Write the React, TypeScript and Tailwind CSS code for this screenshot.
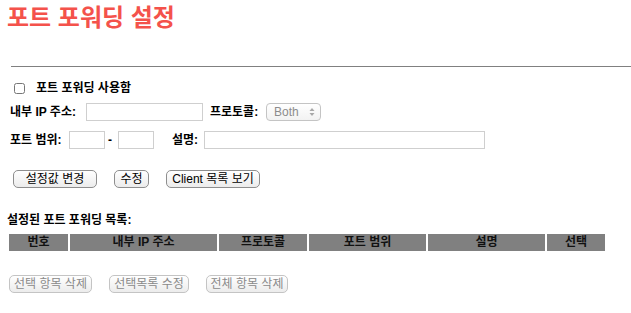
import React from 'react'

const Btn: React.FC<{ label: string; width: string; disabled?: boolean }> = ({ label, width, disabled }) => (
  <button
    type="button"
    disabled={disabled}
    className={`${width} h-[18px] rounded-[5px] border text-[12px] leading-[16px] bg-gradient-to-b from-white to-[#ececec] ${
      disabled ? 'border-[#c4c4c4] text-[#8a8a8a]' : 'border-[#8e8e8e] text-black'
    }`}
  >
    {label}
  </button>
)

const columns = [
  { name: '번호', width: 'w-[59px]' },
  { name: '내부 IP 주소', width: 'w-[147px]' },
  { name: '프로토콜', width: 'w-[88px]' },
  { name: '포트 범위', width: 'w-[117px]' },
  { name: '설명', width: 'w-[117px]' },
  { name: '선택', width: 'w-[58px]' },
]

export default function App() {
  return (
    <div className="w-[631px] h-[313px] bg-white text-black font-['Liberation_Sans','Noto_Sans_CJK_KR',sans-serif] overflow-hidden">
      <h1 className="pl-[7px] pt-[3px] text-[24px] leading-[30px] font-bold text-[#f4524b]">포트 포워딩 설정</h1>

      <div className="ml-[11px] mt-[33px] border-t border-[#808080]" />

      {/* enable */}
      <div className="mt-[11px] h-[20px] flex items-center pl-[14px]">
        <input type="checkbox" className="w-[11px] h-[11px] m-0 accent-white" />
        <span className="ml-[11px] text-[12px] font-bold">포트 포워딩 사용함</span>
      </div>

      {/* ip + protocol */}
      <div className="h-[28px] flex items-center pl-[10px] text-[12px] font-bold">
        <span className="w-[76px]">내부 IP 주소:</span>
        <input className="w-[117px] h-[18px] border border-[#cfcfcf] outline-none" />
        <span className="ml-[7px] w-[56px]">프로토콜:</span>
        <div className="w-[55px] h-[18px] rounded-[4px] border border-[#c4c4c4] bg-gradient-to-b from-white to-[#f2f2f2] flex items-center justify-between pl-[7px] pr-[5px] font-normal text-[#8c8c8c]">
          <span className="text-[12px] leading-none">Both</span>
          <svg width="6" height="10" viewBox="0 0 6 10">
            <path d="M3 1 L5.5 4 H0.5 Z" fill="#a8a8a8" />
            <path d="M3 9 L5.5 6 H0.5 Z" fill="#a8a8a8" />
          </svg>
        </div>
      </div>

      {/* port range + desc */}
      <div className="h-[27px] flex items-center pl-[10px] text-[12px] font-bold">
        <span className="w-[59px]">포트 범위:</span>
        <input className="w-[36px] h-[18px] border border-[#cfcfcf] outline-none" />
        <span className="w-[13px] pl-[3px]">-</span>
        <input className="w-[36px] h-[18px] border border-[#cfcfcf] outline-none" />
        <span className="ml-[18px] w-[32px]">설명:</span>
        <input className="w-[281px] h-[18px] border border-[#cfcfcf] outline-none" />
      </div>

      {/* actions */}
      <div className="mt-[17px] flex items-center pl-[13px] gap-[17px]">
        <Btn label="설정값 변경" width="w-[84px]" />
        <Btn label="수정" width="w-[35px]" />
        <Btn label="Client 목록 보기" width="w-[94px]" />
      </div>

      <div className="mt-[24px] pl-[7px] text-[12px] leading-[16px] font-bold">설정된 포트 포워딩 목록:</div>

      <table className="ml-[7px] mt-[4px] border-separate border-spacing-[2px]">
        <thead>
          <tr>
            {columns.map((c) => (
              <th
                key={c.name}
                className={`${c.width} h-[17px] p-0 bg-[#808080] text-[12px] leading-[17px] font-bold text-[#111]`}
              >
                {c.name}
              </th>
            ))}
          </tr>
        </thead>
      </table>

      <div className="mt-[22px] flex items-center pl-[9px] gap-[17px]">
        <Btn label="선택 항목 삭제" width="w-[83px]" disabled />
        <Btn label="선택목록 수정" width="w-[80px]" disabled />
        <Btn label="전체 항목 삭제" width="w-[82px]" disabled />
      </div>
    </div>
  )
}
